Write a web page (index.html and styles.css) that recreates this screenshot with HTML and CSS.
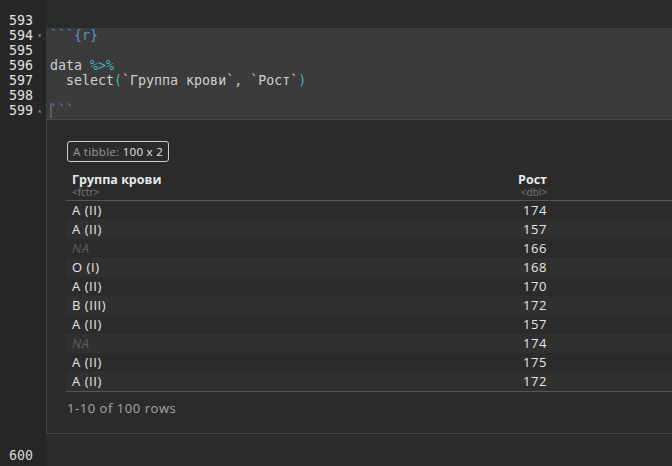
FILE: index.html
```html
<!DOCTYPE html>
<html>
<head>
<meta charset="utf-8">
<link rel="stylesheet" href="styles.css">
</head>
<body>
<div class="editor">
  <div class="line top"><div class="ln"></div><div class="code"></div></div>
  <div class="line"><div class="ln">593</div><div class="code"></div></div>
  <div class="chunk">
    <div class="line"><div class="ln">594<span class="fold">&#9662;</span></div><div class="code"><span class="bt">```{r}</span></div></div>
    <div class="line"><div class="ln">595</div><div class="code"></div></div>
    <div class="line"><div class="ln">596</div><div class="code">data <span class="op">%&gt;%</span></div></div>
    <div class="line"><div class="ln">597</div><div class="code">  select<span class="op">(</span>`Группа крови`, `Рост`<span class="op">)</span></div></div>
    <div class="line"><div class="ln">598</div><div class="code"></div></div>
    <div class="line"><div class="ln">599<span class="fold">&#9652;</span></div><div class="code"><span class="cursor"></span><span class="bt">```</span></div></div>
    <div class="line chunk-end"><div class="ln"></div><div class="code"></div></div>
  </div>
  <div class="outrow">
    <div class="ln"></div>
    <div class="output">
      <div class="tibble-tag"><span class="dim">A tibble:</span> 100 x 2</div>
      <div class="table">
        <div class="thead">
          <div class="c1"><div class="name">Группа крови</div><div class="type">&lt;fctr&gt;</div></div>
          <div class="c2"><div class="name">Рост</div><div class="type">&lt;dbl&gt;</div></div>
        </div>
        <div class="tr"><div class="c1">A (II)</div><div class="c2">174</div></div>
        <div class="tr"><div class="c1">A (II)</div><div class="c2">157</div></div>
        <div class="tr"><div class="c1 na">NA</div><div class="c2">166</div></div>
        <div class="tr"><div class="c1">O (I)</div><div class="c2">168</div></div>
        <div class="tr"><div class="c1">A (II)</div><div class="c2">170</div></div>
        <div class="tr"><div class="c1">B (III)</div><div class="c2">172</div></div>
        <div class="tr"><div class="c1">A (II)</div><div class="c2">157</div></div>
        <div class="tr"><div class="c1 na">NA</div><div class="c2">174</div></div>
        <div class="tr"><div class="c1">A (II)</div><div class="c2">175</div></div>
        <div class="tr"><div class="c1">A (II)</div><div class="c2">172</div></div>
      </div>
      <div class="footer">1-10 of 100 rows</div>
    </div>
  </div>
  <div class="line gap"><div class="ln"></div><div class="code"></div></div>
  <div class="line"><div class="ln last">600</div><div class="code"></div></div>
  <div class="line"><div class="ln"></div><div class="code"></div></div>
</div>
</body>
</html>
```
FILE: styles.css
```css
html, body {
  margin: 0;
  padding: 0;
  background: #2b2b2b;
  overflow: hidden;
}
.editor {
  width: 672px;
  height: 466px;
  overflow: hidden;
  font-family: "DejaVu Sans Mono", "Liberation Mono", monospace;
  font-size: 13.3px;
  color: #cfcfcf;
}
.line {
  display: flex;
  height: 15px;
  line-height: 15px;
}
.line.top { height: 13px; }
.line.gap { height: 14px; }
.ln {
  width: 46px;
  flex: none;
  box-sizing: border-box;
  padding-right: 13px;
  text-align: right;
  background: #262626;
  color: #e2e2e2;
  position: relative;
}
.ln.last { color: #d8d8d8; }
.fold {
  position: absolute;
  right: 4px;
  top: 0;
  font-size: 8px;
  color: #8a8a8a;
}
.code {
  flex: 1;
  padding-left: 4px;
  white-space: pre;
}
.chunk .code { background: #3b3b3b; }
.line.chunk-end { height: 2px; }
.chunk-end .code { background: #3b3b3b; border-bottom: 1px solid #474747; height: 1px; }
.bt { color: #5b8fc5; }
.op { color: #3fb3b8; }
.cursor {
  display: inline-block;
  width: 2px;
  height: 15px;
  background: #5d5d5d;
  vertical-align: top;
  margin-right: -2px;
}
.outrow {
  display: flex;
  height: 314px;
}
.output {
  flex: 1;
  box-sizing: border-box;
  border-left: 1px solid #444;
  border-bottom: 1px solid #444;
  background: #2b2b2b;
  padding: 21px 0 0 19px;
  font-family: "Open Sans", "Liberation Sans", sans-serif;
  font-size: 13px;
  color: #e6e6e6;
  letter-spacing: 0.55px;
}
.tibble-tag {
  display: inline-block;
  box-sizing: border-box;
  height: 21px;
  line-height: 19px;
  padding: 0 5px;
  margin-left: 1px;
  border: 1px solid #cfcfcf;
  border-radius: 3px;
  font-size: 11.5px;
  color: #e2e2e2;
  letter-spacing: 0.3px;
}
.dim { color: #9a9a9a; }
.table { margin-top: 5px; }
.thead {
  display: flex;
  height: 34px;
  box-sizing: border-box;
  border-bottom: 1px solid #565656;
  padding-top: 5px;
}
.thead .name {
  font-weight: 700;
  font-size: 12.5px;
  line-height: 15px;
  color: #e8e8e8;
  letter-spacing: 0;
}
.thead .type {
  font-size: 10px;
  line-height: 11px;
  margin-top: 0;
  color: #7a7a7a;
  letter-spacing: 0;
}
.c1 {
  width: 420px;
  flex: none;
  box-sizing: border-box;
  padding-left: 6px;
}
.c2 {
  width: 67px;
  flex: none;
  box-sizing: border-box;
  padding-right: 6px;
  text-align: right;
}
.tr {
  display: flex;
  height: 19px;
  line-height: 19px;
}
.tr:nth-child(odd) { background: #303030; }
.tr:last-child { border-bottom: 1px solid #565656; }
.na {
  font-style: italic;
  color: #5c5c5c;
}
.footer {
  margin-top: 7px;
  line-height: 18px;
  padding-left: 1px;
  color: #a8a8a8;
}
```
